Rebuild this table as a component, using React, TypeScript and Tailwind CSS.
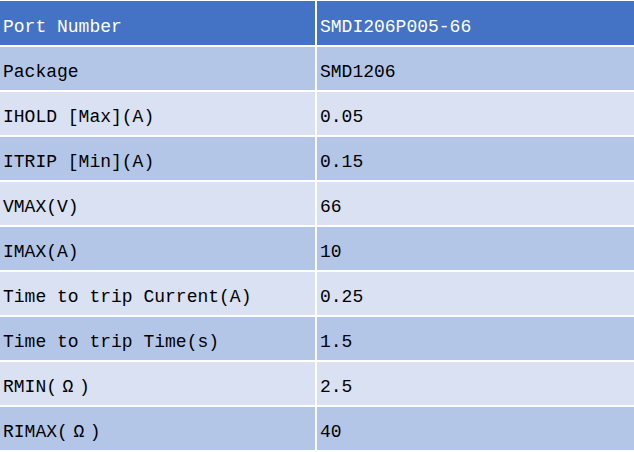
export default function App() {
  const rows: { name: React.ReactNode; value: string }[] = [
    { name: "Package", value: "SMD1206" },
    { name: "IHOLD [Max](A)", value: "0.05" },
    { name: "ITRIP [Min](A)", value: "0.15" },
    { name: "VMAX(V)", value: "66" },
    { name: "IMAX(A)", value: "10" },
    { name: "Time to trip Current(A)", value: "0.25" },
    { name: "Time to trip Time(s)", value: "1.5" },
    { name: <>RMIN(<Wide>Ω</Wide>)</>, value: "2.5" },
    { name: <>RIMAX(<Wide>Ω</Wide>)</>, value: "40" },
  ];

  return (
    <div className="w-[634px] h-[452px] overflow-hidden bg-white pt-[1px] font-['Liberation_Mono',monospace] text-[18px]">
      <div className="grid grid-cols-[315px_1fr] gap-[2px]">
        {/* header */}
        <div className="h-[44px] flex items-center pl-[3px] pt-[8px] bg-[#4472c4] text-white">Port Number</div>
        <div className="h-[44px] flex items-center pl-[3px] pt-[8px] bg-[#4472c4] text-white">SMDI206P005-66</div>

        {rows.map((r, i) => {
          const bg = i % 2 === 0 ? "bg-[#b4c6e7]" : "bg-[#d9e1f2]";
          return (
            <Row key={i} bg={bg} name={r.name} value={r.value} />
          );
        })}
      </div>
    </div>
  );
}

function Row({ bg, name, value }: { bg: string; name: React.ReactNode; value: string }) {
  return (
    <>
      <div className={`h-[43px] flex items-center pl-[3px] pt-[8px] text-black ${bg}`}>{name}</div>
      <div className={`h-[43px] flex items-center pl-[3px] pt-[8px] text-black ${bg}`}>{value}</div>
    </>
  );
}

function Wide({ children }: { children: React.ReactNode }) {
  return <span className="inline-block w-[22px] text-center">{children}</span>;
}
